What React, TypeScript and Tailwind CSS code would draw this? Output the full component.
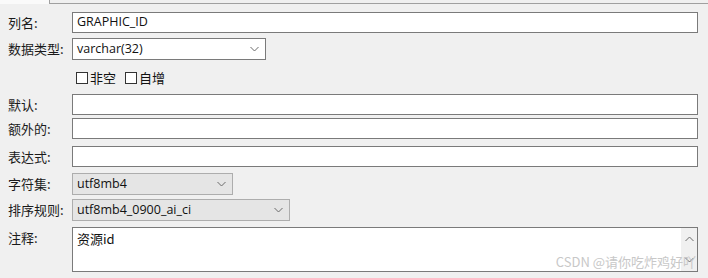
import React from "react";

const CJK = "font-['Noto_Sans_CJK_SC','Microsoft_YaHei',sans-serif]";
const LATIN = "font-['Open_Sans','Noto_Sans_CJK_SC',sans-serif]";

function Chevron({ up = false }: { up?: boolean }) {
  return (
    <svg width="9" height="6" viewBox="0 0 9 6" className="shrink-0">
      <polyline
        points={up ? "0.5,5 4.5,1 8.5,5" : "0.5,1 4.5,5 8.5,1"}
        fill="none"
        stroke="#6b6b6b"
        strokeWidth="1"
      />
    </svg>
  );
}

function Label({ children, top = false }: { children: React.ReactNode; top?: boolean }) {
  return (
    <div className={`w-[72px] shrink-0 pl-2 text-[13px] leading-[18px] text-[#1a1a1a] ${CJK} ${top ? "pt-[2px]" : ""}`}>
      {children}
    </div>
  );
}

function TextBox({ value = "" }: { value?: string }) {
  return (
    <div className={`flex-1 mr-[10px] h-[21px] border border-[#7a7a7a] bg-white flex items-center px-[4px] text-[12.5px] text-[#111] ${LATIN}`}>
      {value}
    </div>
  );
}

function Select({ value, width, disabled = false }: { value: string; width: string; disabled?: boolean }) {
  return (
    <div
      className={`${width} h-[22px] border flex items-center justify-between pl-[4px] pr-[6px] text-[12.5px] text-[#111] ${LATIN} ${
        disabled ? "bg-[#e5e5e5] border-[#adadad]" : "bg-white border-[#7a7a7a]"
      }`}
    >
      <span>{value}</span>
      <Chevron />
    </div>
  );
}

function Check({ label }: { label: string }) {
  return (
    <div className="flex items-center gap-[2px]">
      <div className="w-[12px] h-[12px] border border-[#333] bg-white" />
      <span className={`text-[13px] leading-[18px] text-[#111] ${CJK}`}>{label}</span>
    </div>
  );
}

export default function App() {
  return (
    <div className="relative w-[708px] h-[278px] bg-[#f0f0f0] overflow-hidden">
      {/* tab strip */}
      <div className="flex h-[4px]">
        <div className="w-[50px] bg-[#fafafa] border-r border-[#a0a0a0]" />
        <div className="flex-1 border-b border-[#a0a0a0]" />
      </div>

      <div className="flex flex-col">
        <div className="flex items-center h-[21px] mt-[8px]">
          <Label>列名:</Label>
          <TextBox value="GRAPHIC_ID" />
        </div>

        <div className="flex items-center h-[22px] mt-[5px]">
          <Label>数据类型:</Label>
          <Select value="varchar(32)" width="w-[194px]" />
        </div>

        <div className="flex items-center gap-[9px] pl-[76px] mt-[12px] h-[12px]">
          <Check label="非空" />
          <Check label="自增" />
        </div>

        <div className="flex items-center h-[21px] mt-[10px]">
          <Label>默认:</Label>
          <TextBox />
        </div>

        <div className="flex items-center h-[21px] mt-[3px]">
          <Label>额外的:</Label>
          <TextBox />
        </div>

        <div className="flex items-center h-[21px] mt-[7px]">
          <Label>表达式:</Label>
          <TextBox />
        </div>

        <div className="flex items-center h-[22px] mt-[6px]">
          <Label>字符集:</Label>
          <Select value="utf8mb4" width="w-[161px]" disabled />
        </div>

        <div className="flex items-center h-[22px] mt-[4px]">
          <Label>排序规则:</Label>
          <Select value="utf8mb4_0900_ai_ci" width="w-[218px]" disabled />
        </div>

        <div className="flex items-start mt-[6px]">
          <Label top>注释:</Label>
          <div className="flex-1 mr-[10px] h-[45px] border border-[#7a7a7a] bg-white flex">
            <div className={`flex-1 px-[4px] pt-[1px] text-[13px] text-[#111] ${CJK}`}>资源id</div>
            <div className="w-[16px] bg-[#f0f0f0] flex flex-col items-center justify-between py-[8px]">
              <Chevron up />
              <Chevron />
            </div>
          </div>
        </div>
      </div>

      {/* watermark */}
      <div className={`absolute right-[12px] bottom-[7px] text-[13px] leading-[18px] text-[#c8c8c8] ${CJK}`}>
        CSDN @请你吃炸鸡好吖
      </div>
    </div>
  );
}
